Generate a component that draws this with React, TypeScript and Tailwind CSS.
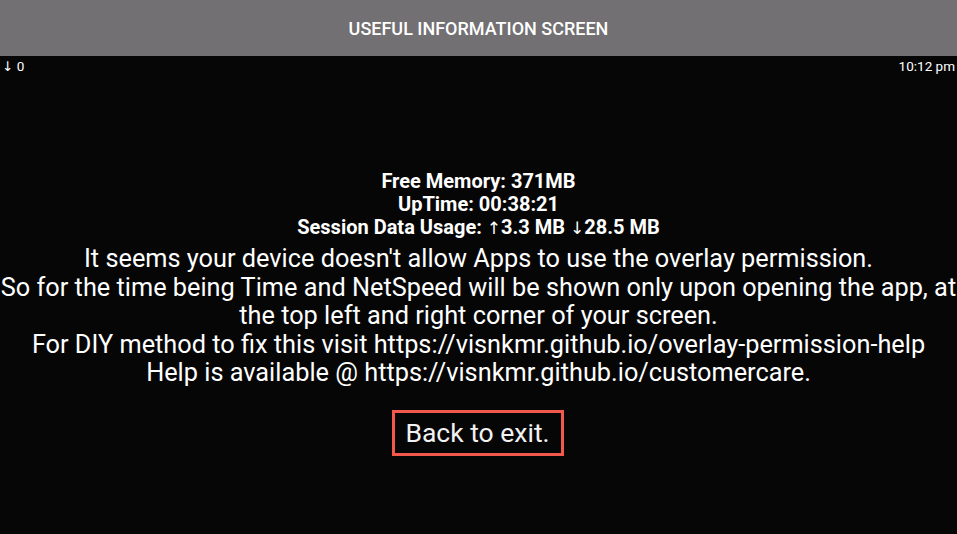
const arrowFont = { fontFamily: "'DejaVu Sans', sans-serif" };

export default function App() {
  return (
    <div
      className="w-[957px] h-[534px] bg-[#060606] text-white flex flex-col overflow-hidden"
      style={{ fontFamily: "Roboto, 'Noto Sans', sans-serif" }}
    >
      <header className="h-[56px] bg-[#727073] flex items-center justify-center shrink-0">
        <h1 className="text-[18px] font-medium pt-px">USEFUL INFORMATION SCREEN</h1>
      </header>

      <div className="flex justify-between items-center h-[22px] px-[2px] text-[13.5px] leading-none">
        <span>
          <span style={arrowFont} className="font-normal">↓</span> 0
        </span>
        <span>10:12 pm</span>
      </div>

      <main className="flex flex-col items-center text-center pt-[92px]">
        <div className="text-[20px] font-bold leading-[23px]">
          <p>Free Memory: 371MB</p>
          <p>UpTime: 00:38:21</p>
          <p>
            Session Data Usage: <span style={arrowFont} className="font-normal text-[17px]">↑</span>3.3 MB{" "}
            <span style={arrowFont} className="font-normal text-[17px]">↓</span>28.5 MB
          </p>
        </div>
        <div className="text-[25.3px] leading-[28.6px] mt-[5px]">
          <p>It seems your device doesn't allow Apps to use the overlay permission.</p>
          <p>
            So for the time being Time and NetSpeed will be shown only upon opening the app, at
            <br />
            the top left and right corner of your screen.
          </p>
          <p>For DIY method to fix this visit https://visnkmr.github.io/overlay-permission-help</p>
          <p>Help is available @ https://visnkmr.github.io/customercare.</p>
        </div>
        <button className="mt-[22px] -translate-x-px w-[172px] h-[46px] border-[3px] border-[#f2584c] text-[26.5px] text-[#f2f2f2] flex items-center justify-center">
          Back to exit.
        </button>
      </main>
    </div>
  );
}
